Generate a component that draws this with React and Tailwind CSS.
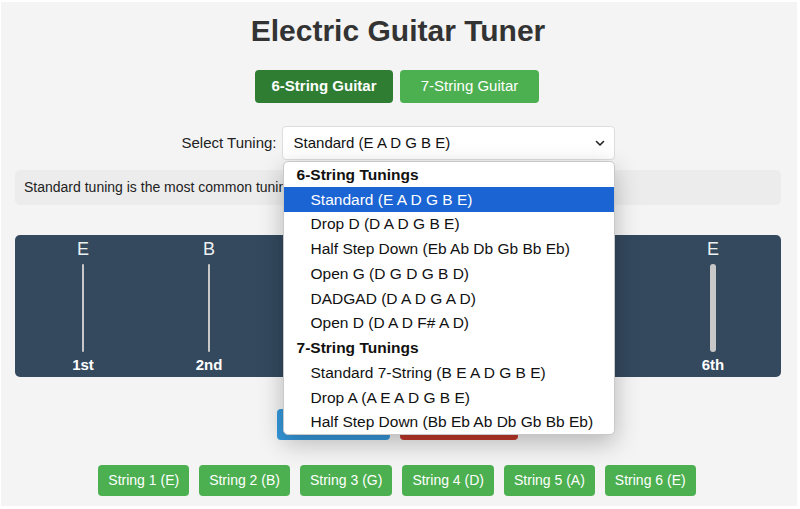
import { useState } from "react";

const strings = [
  { note: "E", label: "1st", width: 2 },
  { note: "B", label: "2nd", width: 2 },
  { note: "G", label: "3rd", width: 3 },
  { note: "D", label: "4th", width: 4 },
  { note: "A", label: "5th", width: 5 },
  { note: "E", label: "6th", width: 6 },
];

const groups = [
  {
    name: "6-String Tunings",
    options: [
      "Standard (E A D G B E)",
      "Drop D (D A D G B E)",
      "Half Step Down (Eb Ab Db Gb Bb Eb)",
      "Open G (D G D G B D)",
      "DADGAD (D A D G A D)",
      "Open D (D A D F# A D)",
    ],
  },
  {
    name: "7-String Tunings",
    options: [
      "Standard 7-String (B E A D G B E)",
      "Drop A (A E A D G B E)",
      "Half Step Down (Bb Eb Ab Db Gb Bb Eb)",
    ],
  },
];

export default function App() {
  const [selected] = useState("Standard (E A D G B E)");

  return (
    <div
      className="min-h-[509px] bg-white pl-[1px] pt-[2px]"
      style={{ fontFamily: '"Liberation Sans", Arial, sans-serif' }}
    >
      <div className="h-[504px] w-[796px] bg-[#f4f4f4] text-[#333]">
        <h1 className="pr-[2px] pt-[11px] text-center text-[30px] font-bold leading-[36px] text-[#333]">
          Electric Guitar Tuner
        </h1>

        <div className="mt-[21px] flex justify-center gap-[7px] pr-[4px]">
          <button className="h-[33px] w-[138px] rounded-[4px] bg-[#2e7d32] text-[15px] font-bold text-white">
            6-String Guitar
          </button>
          <button className="h-[33px] w-[139px] rounded-[4px] bg-[#4caf50] text-[15px] text-white">
            7-String Guitar
          </button>
        </div>

        <div className="mt-[23px] flex items-center justify-center gap-[5px] pr-[2px]">
          <label className="text-[15px] text-[#222]">Select Tuning:</label>
          <div className="relative">
            <div className="flex h-[34px] w-[333px] items-center justify-between rounded-[4px] border border-[#ddd] bg-white pl-[11px] pr-[8px] text-[15px] text-[#111]">
              <span>{selected}</span>
              <svg width="12" height="12" viewBox="0 0 12 12" fill="none">
                <path
                  d="M2.5 4.5 L6 8 L9.5 4.5"
                  stroke="#222"
                  strokeWidth="1.6"
                  strokeLinecap="round"
                  strokeLinejoin="round"
                />
              </svg>
            </div>

            <div className="absolute left-[1px] top-[35px] z-10 w-[332px] overflow-hidden rounded-[5px] border border-[#c8c8c8] bg-white shadow-[0_8px_24px_rgba(0,0,0,0.25)]">
              {groups.map((group) => (
                <div key={group.name}>
                  <div className="flex h-[24.75px] items-center pl-[13px] text-[15.5px] font-bold text-[#111]">
                    {group.name}
                  </div>
                  {group.options.map((opt, i) => {
                    const active = group.name === "6-String Tunings" && i === 0;
                    return (
                      <div
                        key={opt}
                        className={
                          active
                            ? "flex h-[24.75px] items-center bg-[#1a64d4] pl-[27px] text-[15.5px] text-white"
                            : "flex h-[24.75px] items-center pl-[27px] text-[15.5px] text-[#111]"
                        }
                      >
                        {opt}
                      </div>
                    );
                  })}
                </div>
              ))}
            </div>
          </div>
        </div>

        <div className="ml-[14px] mr-[16px] mt-[10px] flex h-[35px] items-center rounded-[5px] bg-[#ececec] px-[9px] text-[14px] text-[#222]">
          Standard tuning is the most common tuning for electric guitar.
        </div>

        <div className="ml-[14px] mr-[16px] mt-[30px] grid h-[142px] grid-cols-6 rounded-[5px] bg-[#34495e] px-[5px]">
          {strings.map((s, i) => (
            <div key={i} className="flex flex-col items-center pt-[3px]">
              <span className="text-[18px] leading-[22px] text-[#ecf0f1]">{s.note}</span>
              <div
                className="mt-[4px] h-[88px] rounded-full bg-[#c8c8c8]"
                style={{ width: s.width }}
              />
              <span className="mt-[4px] text-[15px] font-bold leading-[18px] text-white">
                {s.label}
              </span>
            </div>
          ))}
        </div>

        <div className="mt-[32px] flex justify-center gap-[10px] pr-[4px]">
          <button className="h-[31px] w-[113px] rounded-[4px] bg-[#3498db] text-[15px] text-white">
            Play Note
          </button>
          <button className="h-[31px] w-[118px] rounded-[4px] bg-[#c0392b] text-[15px] text-white">
            Stop
          </button>
        </div>

        <div className="mt-[25px] flex justify-center gap-[10px] pr-[4px]">
          {strings.map((s, i) => (
            <button
              key={i}
              className="h-[31px] rounded-[4px] bg-[#4caf50] px-[10px] text-[14px] text-white"
            >
              String {i + 1} ({s.note})
            </button>
          ))}
        </div>
      </div>
    </div>
  );
}
